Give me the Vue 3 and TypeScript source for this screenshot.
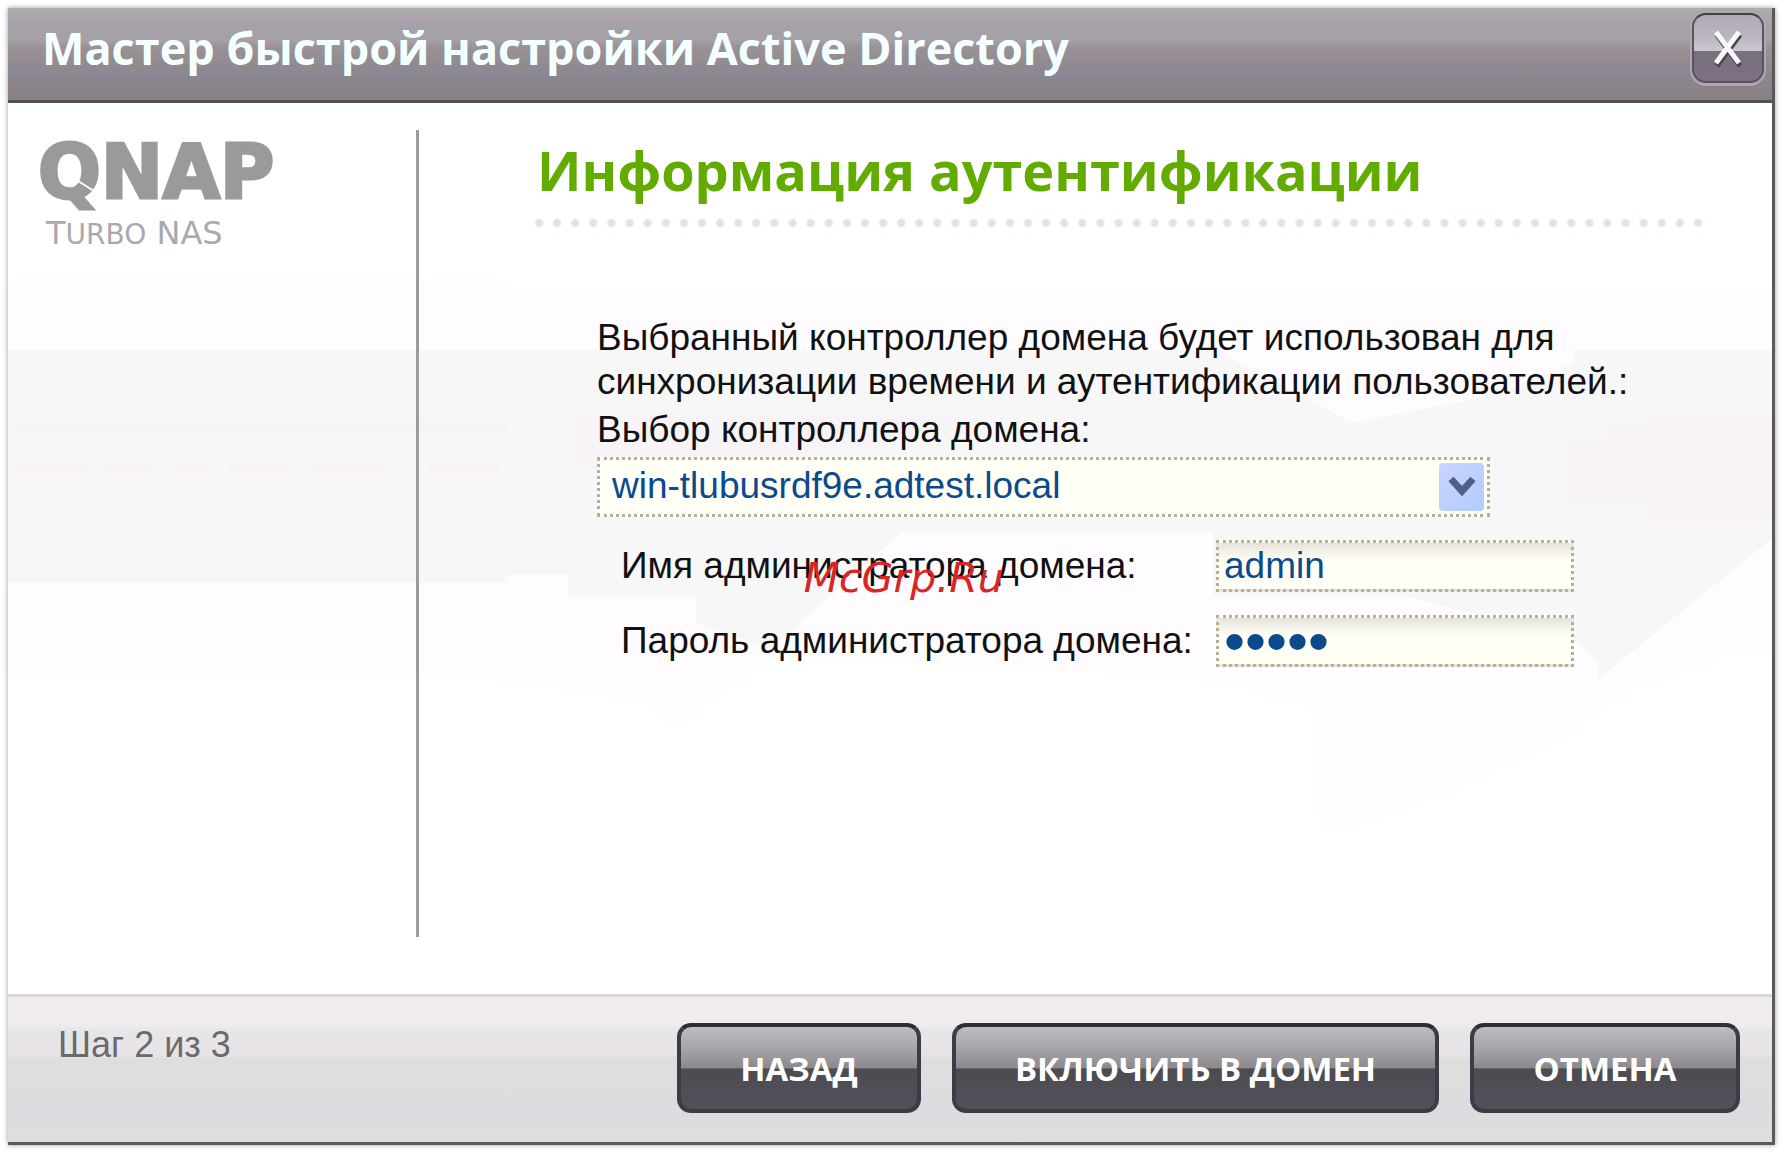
<script setup lang="ts">
import { ref } from 'vue'

const controllers: string[] = ['win-tlubusrdf9e.adtest.local']
const controller = ref<string>(controllers[0])
const adminName = ref<string>('admin')
const adminPassword = ref<string>('admin')
</script>

<template>
  <div class="page">
    <section class="window" aria-labelledby="window-title">
      <header class="titlebar">
        <h1 id="window-title" class="title">Мастер быстрой настройки Active Directory</h1>
        <button type="button" class="close" aria-label="Закрыть">
          <svg viewBox="0 0 34 40" width="34" height="40" aria-hidden="true">
            <path d="M6 7L29 38M29 7L6 38" stroke="#4a4550" stroke-width="5" />
            <path d="M5 4L28 35M28 4L5 35" stroke="#f8f8f8" stroke-width="5" />
          </svg>
        </button>
      </header>

      <div class="body">
        <svg class="backdrop" viewBox="0 0 1765 892" preserveAspectRatio="none" aria-hidden="true">
          <path fill="#fffcff" d="M0 177H500V190H1765V547H1731L1620 590L1550 640L1380 715L1312 726V606L1206 577L771 552L664 628L640 597L492 579V574H0Z" />
          <path fill="#f7f7f7" d="M0 247H1206L1345 320L1484 293L1567 260V247H1765V436L1591 577V560L1570 540L1400 494H1206V430H894L763 547L689 521V494H560V472H500V480H0Z" />
          <path fill="#f7f3f7" d="M6 318H500V330H6ZM6 360H78V374H6ZM96 360H147V374H96ZM166 360H202V374H166ZM220 360H282V374H220ZM306 360H378V374H306ZM420 360H492V374H420ZM566 310H960V330H880V350H800V366H566ZM1640 310H1765V420H1640V400H1560V340H1600V320H1640Z" />
        </svg>

        <aside class="sidebar">
          <svg class="logo" viewBox="0 0 290 100" role="img" aria-label="QNAP Turbo NAS">
            <text class="logo-name" x="-3" y="53">QNAP</text>
            <path d="M34 34L56 48" stroke="#ffffff" stroke-width="2" />
            <text class="logo-line" x="5" y="99">T<tspan class="logo-small">urbo</tspan> NAS</text>
          </svg>
        </aside>

        <main class="content">
          <h2 class="heading">Информация аутентификации</h2>
          <div class="dots"></div>
          <form class="form" @submit.prevent>
            <p class="text">Выбранный контроллер домена будет использован для<br />синхронизации времени и аутентификации пользователей.:</p>
            <label class="text select-label" for="controller">Выбор контроллера домена:</label>
            <div class="select-wrap">
              <select id="controller" v-model="controller" class="select">
                <option v-for="name in controllers" :key="name" :value="name">{{ name }}</option>
              </select>
              <span class="arrow" aria-hidden="true">
                <svg viewBox="0 0 28 22" width="28" height="22">
                  <path d="M3 3L14 15L25 3" fill="none" stroke="#4d6185" stroke-width="7" />
                </svg>
              </span>
            </div>
            <div class="row">
              <label class="text row-label" for="admin-name">Имя администратора домена:</label>
              <input id="admin-name" v-model="adminName" class="field" type="text" />
            </div>
            <div class="row">
              <label class="text row-label" for="admin-password">Пароль администратора домена:</label>
              <input id="admin-password" v-model="adminPassword" class="field password" type="password" />
            </div>
          </form>
        </main>
      </div>

      <footer class="footer">
        <span class="step">Шаг 2 из 3</span>
        <div class="actions">
          <button type="button" class="action back">НАЗАД</button>
          <button type="button" class="action join">ВКЛЮЧИТЬ В ДОМЕН</button>
          <button type="button" class="action cancel">ОТМЕНА</button>
        </div>
      </footer>
    </section>
    <div class="watermark">McGrp.Ru</div>
  </div>
</template>

<style>
body {
  background: #ffffff;
}
</style>

<style scoped>
* {
  box-sizing: border-box;
}

.page {
  position: relative;
  display: flex;
  min-height: 100vh;
  padding: 8px 11px 11px 8px;
  font-family: "Liberation Sans", Arial, sans-serif;
}

.window {
  display: flex;
  flex: 1;
  flex-direction: column;
  background: #ffffff;
  border-right: 3px solid #5a5a5a;
  border-bottom: 3px solid #5a5a5a;
  box-shadow: 0 0 5px #9a9a9a;
}

.titlebar {
  display: flex;
  align-items: center;
  justify-content: space-between;
  height: 95px;
  padding: 0 8px 12px 34px;
  background: linear-gradient(#aeaab0 0%, #aca4aa 12%, #a3a1ab 20%, #a7a0a7 35%, #9a9298 42%, #908b90 62%, #8b8594 75%, #8a8388 84%, #8a8088 100%);
  border-bottom: 3px solid #545154;
}

.title {
  margin: 0;
  color: #f4ffff;
  font-family: "Open Sans", "Noto Sans", sans-serif;
  font-size: 45px;
  font-weight: 700;
  line-height: 56px;
}

.close {
  display: flex;
  align-items: center;
  justify-content: center;
  width: 72px;
  height: 70px;
  padding: 0;
  background: linear-gradient(#b0abb6 0%, #b8b3be 30%, #cac8ce 54%, #786f7c 55%, #7b7184 100%);
  border: 2px solid #5b5263;
  border-top-color: #454045;
  border-radius: 14px;
  box-shadow: 0 1px 0 2px #b0a6b2;
}

.body {
  position: relative;
  display: flex;
  flex: 1;
  padding-top: 27px;
  padding-bottom: 57px;
}

.backdrop {
  position: absolute;
  inset: 0;
  width: 100%;
  height: 100%;
}

.sidebar {
  position: relative;
  width: 411px;
  padding: 15px 0 0 33px;
  border-right: 3px solid #9c9c9c;
}

.logo {
  display: block;
  width: 290px;
  height: 100px;
  overflow: visible;
}

.logo-name {
  fill: #9b999b;
  stroke: #9b999b;
  stroke-width: 3px;
  font-family: "DejaVu Sans", sans-serif;
  font-size: 74px;
  font-weight: 700;
}

.logo-line {
  fill: #aaa8b0;
  font-family: "DejaVu Sans", sans-serif;
  font-size: 32px;
}

.logo-small {
  font-size: 28px;
  text-transform: uppercase;
}

.content {
  position: relative;
  flex: 1;
  padding: 0 60px 0 115px;
}

.heading {
  margin: 0;
  padding-left: 3px;
  color: #62ab00;
  font-family: "Open Sans", "Noto Sans", sans-serif;
  font-size: 54px;
  font-weight: 700;
  line-height: 80px;
}

.dots {
  height: 10px;
  margin-top: 8px;
  background-image: radial-gradient(circle at 5px 5px, #e6e2d8 3px, transparent 5px);
  background-repeat: round no-repeat;
  background-size: 18px 10px;
}

.form {
  padding: 88px 0 0 63px;
}

.text {
  display: block;
  margin: 0;
  color: #111111;
  font-size: 37px;
  line-height: 44px;
  white-space: nowrap;
}

.select-label {
  margin-top: 4px;
}

.select-wrap {
  position: relative;
  width: 893px;
  margin: 5px 0 23px;
}

.select,
.field {
  display: block;
  color: #0b4a8c;
  font-family: inherit;
  font-size: 37px;
  border: 3px dotted #b5b09c;
  border-radius: 0;
  outline: none;
}

.select {
  width: 100%;
  height: 60px;
  padding: 0 60px 4px 12px;
  appearance: none;
  background: #fffff6;
}

.arrow {
  position: absolute;
  top: 6px;
  right: 6px;
  display: flex;
  align-items: center;
  justify-content: center;
  width: 45px;
  height: 48px;
  background: linear-gradient(135deg, #cad4ff, #b2ccff);
  border-radius: 4px;
  pointer-events: none;
}

.row {
  display: flex;
  align-items: center;
  margin-bottom: 23px;
  padding-left: 24px;
}

.row-label {
  width: 595px;
}

.field {
  width: 358px;
  height: 52px;
  padding: 0 5px;
  background: linear-gradient(#e6e4da, #fffff6 18px);
}

.password {
  font-size: 60px;
}

.footer {
  display: flex;
  align-items: flex-start;
  justify-content: space-between;
  height: 148px;
  padding: 26px 32px 0 50px;
  background: linear-gradient(#efebef 0%, #efebef 20%, #e7e7e7 22%, #e7e3e7 40%, #dedede 43%, #dddbdf 80%, #dedede 100%);
  border-top: 3px solid #dbd8dc;
}

.step {
  color: #6b696b;
  font-size: 36px;
  line-height: 44px;
}

.actions {
  display: flex;
  gap: 31px;
}

.action {
  height: 90px;
  padding: 0;
  color: #ffffff;
  font-family: "Open Sans", "Noto Sans", sans-serif;
  font-size: 33px;
  font-weight: 700;
  background: linear-gradient(#bfbcc2 0%, #a9a7ab 24%, #8b898d 50%, #4c4c50 51%, #53505b 100%);
  border: 4px solid #3d3b48;
  border-top-color: #302d33;
  border-radius: 14px;
}

.back {
  width: 244px;
}

.join {
  width: 487px;
}

.cancel {
  width: 270px;
}

.watermark {
  position: absolute;
  top: 50%;
  left: 45%;
  color: #d92525;
  font-family: "DejaVu Sans", sans-serif;
  font-size: 41px;
  font-style: italic;
  line-height: 48px;
  pointer-events: none;
  transform: translateY(-50%);
}
</style>
